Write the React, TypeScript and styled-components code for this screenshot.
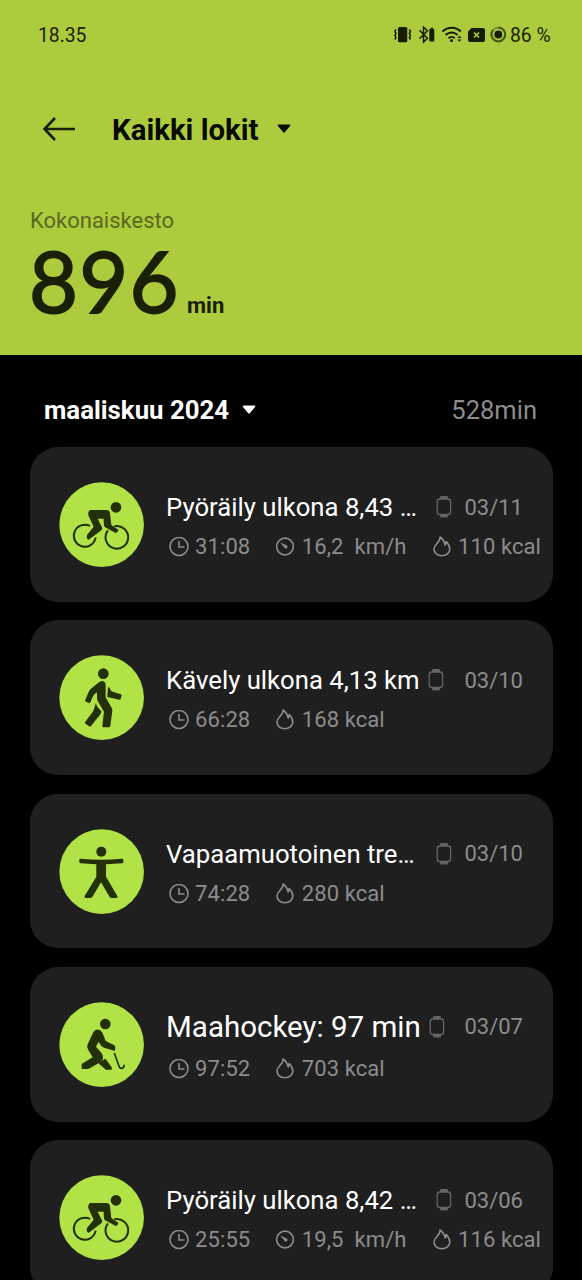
import React from "react";
import styled, { createGlobalStyle } from "styled-components";

const GlobalStyle = createGlobalStyle`
  * { box-sizing: border-box; }
  body { margin: 0; background: #000; font-family: Roboto, "Liberation Sans", sans-serif; }
  svg { display: block; flex: none; }
`;

const Screen = styled.main`
  width: 582px;
  height: 1280px;
  overflow: hidden;
  background: #000;
`;

const Hero = styled.header`
  height: 355px;
  background: #adcc3d;
  color: #1a2006;
`;

const StatusBar = styled.div`
  height: 70px;
  padding: 0 31px 0 38px;
  display: flex;
  align-items: center;
  justify-content: space-between;
  font-size: 19.3px;
  line-height: 24px;
`;

const Clock = styled.span`
  padding-top: 2px;
`;

const StatusIcons = styled.div`
  display: flex;
  align-items: center;
`;

const Battery = styled.span`
  width: 41px;
  margin-left: 2px;
  padding-top: 2px;
  white-space: nowrap;
`;

const NavBar = styled.div`
  height: 118px;
  padding-left: 42px;
  display: flex;
  align-items: center;
`;

const NavTitle = styled.h1`
  margin: 1px 19px 0 37px;
  font-size: 29.4px;
  line-height: 36px;
  font-weight: 700;
  color: #080a02;
`;

const Summary = styled.section`
  padding: 18px 0 0 30px;
`;

const SummaryLabel = styled.div`
  font-size: 22px;
  line-height: 30px;
  color: #59691f;
`;

const Total = styled.div`
  display: flex;
  align-items: baseline;
  height: 96px;
`;

const TotalNumber = styled.span`
  width: 150px;
  margin: 0 8px 0 -1px;
  font-family: Lato, Roboto, sans-serif;
  font-size: 84.5px;
  line-height: 90px;
  letter-spacing: 1.2px;
  -webkit-text-stroke: 1.8px #1a2006;
`;

const TotalUnit = styled.span`
  font-size: 22px;
  font-weight: 700;
`;

const MonthBar = styled.div`
  height: 92px;
  padding: 17px 45px 0 44px;
  display: flex;
  align-items: center;
`;

const MonthName = styled.h2`
  margin: 0 13px 0 0;
  font-size: 25.8px;
  line-height: 32px;
  font-weight: 700;
  color: #fff;
`;

const MonthTotal = styled.span`
  margin-left: auto;
  font-size: 25.5px;
  line-height: 32px;
  color: #8c8c8c;
`;

const List = styled.ul`
  margin: 0;
  padding: 0 29.5px;
  list-style: none;
  display: flex;
  flex-direction: column;
  gap: 18.6px;
`;

const Card = styled.li`
  flex: none;
  height: 154.7px;
  padding: 35px 0 0 29.3px;
  border-radius: 28px;
  background: #1f1f1f;
  display: flex;
  align-items: flex-start;
`;

const Details = styled.div`
  flex: 1;
  min-width: 0;
  margin-left: 22px;
`;

const TitleRow = styled.div`
  height: 50px;
  display: flex;
  align-items: center;
  padding-right: 29.5px;
`;

const Title = styled.h3<{ $width: number; $large?: boolean }>`
  margin: 0;
  width: ${(p) => p.$width}px;
  font-size: ${(p) => (p.$large ? 29.5 : 25.7)}px;
  line-height: 36px;
  font-weight: 400;
  white-space: nowrap;
  color: #fff;
`;

const DateText = styled.time`
  margin-left: auto;
  padding-top: 1px;
  font-size: 22px;
  line-height: 30px;
  color: #8c8c8c;
`;

const Stats = styled.div<{ $low?: boolean }>`
  display: flex;
  gap: 25px;
  padding: ${(p) => (p.$low ? 2 : 0)}px 0 0 2.5px;
`;

const Stat = styled.div`
  display: flex;
  align-items: center;
  gap: 6.5px;
  height: 30px;
  font-size: 22px;
  letter-spacing: 0.08px;
  line-height: 30px;
  white-space: pre;
  color: #8c8c8c;
`;

type Sport = "bike" | "walk" | "free" | "hockey";

const Caret = ({ color }: { color: string }) => (
  <svg width="14" height="10" viewBox="0 0 14 10" fill={color}>
    <path d="M1.6.5h10.8c.9 0 1.2.8.6 1.5L7.8 8.2c-.5.6-1.1.6-1.6 0L1 2C.4 1.300.7.5 1.600.5z" />
  </svg>
);

const BackArrow = () => (
  <svg width="33" height="26" viewBox="0 0 33 26" fill="none" stroke="#1a2006" strokeWidth="2.6">
    <path d="M33 13H2.500M13 2L2.500 13 13 24" />
  </svg>
);

const StatusGlyphs = () => (
  <svg width="114" height="24" viewBox="394 23 114 24" fill="#171c05">
    <rect x="398" y="27" width="9.300" height="15.300" rx="1.500" />
    <g fill="none" stroke="#171c05" strokeWidth="1.500">
      <path d="M396 29.500l-1.200 2 1.200 2-1.200 2 1.200 2-1.200 2M409.300 29.500l1.200 2-1.200 2 1.200 2-1.200 2 1.200 2" />
      <path d="M419.500 30.300l8 8-4 3.700V27.200l4 3.600-8 8" />
      <path d="M442.500 31.500c5.300-5 13-5 18.300 0M445.700 35c3.500-3.300 8.400-3.300 11.900 0M448.500 38.300c1.800-1.700 4.500-1.700 6.300 0" strokeWidth="2" />
    </g>
    <rect x="429.300" y="29" width="5" height="12.500" rx="1" />
    <rect x="430.600" y="27.700" width="2.400" height="2" />
    <circle cx="451.500" cy="40.500" r="1.500" />
    <path d="M457.300 38l2.100-2.300 2.100 2.300zM457.300 39.500l2.100 2.300 2.100-2.300z" />
    <path d="M471.500 28h11.500q2 0 2 2v10q0 2-2 2h-13q-2 0-2-2v-8.500z" />
    <path d="M474 32.500l5 5M479 32.500l-5 5" stroke="#adcc3d" strokeWidth="1.700" />
    <circle cx="498.300" cy="34.500" r="6.900" fill="none" stroke="#7b9128" strokeWidth="1.900" />
    <path d="M498.300 27.600a6.900 6.900 0 1 1-5.300 2.500" fill="none" stroke="#465414" strokeWidth="2" />
    <circle cx="498.300" cy="34.500" r="3.900" />
  </svg>
);

const WatchIcon = () => (
  <svg width="16" height="24" viewBox="0 0 16 24">
    <path d="M4.500 1h7l1.200 4H3.300zM4.500 22.500h7l1.200-4H3.300z" fill="#636363" />
    <rect x="1.200" y="4" width="13.400" height="15.500" rx="2.700" fill="#1f1f1f" stroke="#666" strokeWidth="1.300" />
  </svg>
);

const ClockIcon = () => (
  <svg width="20" height="20" viewBox="0 0 20 20" fill="none" stroke="#8c8c8c" strokeWidth="1.600">
    <circle cx="10" cy="9.500" r="9" />
    <path d="M10 4v6h5.500" />
  </svg>
);

const SpeedIcon = () => (
  <svg width="20" height="20" viewBox="0 0 20 20" fill="none" stroke="#8c8c8c" strokeWidth="1.600">
    <circle cx="10" cy="9.500" r="8.400" />
    <path d="M5.300 5.500l6 2.700a1.700 1.700 0 1 1-2 2.400z" fill="#8c8c8c" stroke="none" />
  </svg>
);

const FlameIcon = () => (
  <svg width="20" height="22" viewBox="0 0 20 22" fill="none" stroke="#8c8c8c" strokeWidth="1.600" strokeLinejoin="round">
    <path d="M8 1c.4 3-1.200 4.800-3.200 6.700C3 9.500 2 11 2 13c0 4 3.300 6.700 7.800 6.700s8-2.700 8-6.700c0-2.900-1.300-5.200-3.600-7.500 0 1.600-.1 2.400-1 3.500C12.500 6 11 3 8 1z" />
  </svg>
);

const frames: Record<Sport, string> = {
  bike: "26 20 256 256",
  walk: "26 21 256 256",
  free: "26 24 256 256",
  hockey: "26 18 256 256",
};

const figures: Record<Sport, React.ReactNode> = {
  bike: (
    <>
      <circle cx="197" cy="96" r="16" />
      <g fill="none" stroke="#23300a" strokeWidth="6">
        <path d="M119 152A33 33 0 1 0 136 187" />
        <path d="M192 153A34 34 0 1 1 173 165" />
      </g>
      <path d="M120 104h48q10 0 11 10l4 35 21 14q-1 9-8 10l-34-19q-2-8-2-24h-18l13 26q2 5-2 9l-39 29q-7-7-4-15l20-25-16-34q-2-12 6-16z" />
    </>
  ),
  walk: (
    <>
      <circle cx="159" cy="77" r="16" />
      <path d="M155 99q11 1 11 12v37l18 31q3 5 2 10l-6 45q-1 4-5 4h-15q-5 0-4-5l5-42-19-32q-2-4-2-10v-16q-10 6-12 12l-8 18q-1 3-4 2l-9-4q-4-2-2-6l11-25q2-5 6-8l22-18q6-5 11-5z" />
      <path d="M173 118q5 0 6 4 2 8 10 10l23 7q2 1 2 4l-3 10q-1 3-4 2l-36-8zM137 164q1 11 8 17l8 9q0 7-5 12l-26 32q-2 3-5 1l-12-8q-3-2 0-6l22-29q3-4 4-9z" />
    </>
  ),
  free: (
    <>
      <circle cx="153" cy="92" r="15" />
      <path d="M90 113q32 3 63 3t63-3q3 0 3 3v8q0 3-3 3-25 1-49 3v37l34 58q3 5-3 6h-15q-3 0-5-3l-26-44-26 44q-2 3-5 3h-15q-5-1-3-6l35-58v-37q-24-2-48-3-3 0-3-3v-8q0-3 3-3z" />
    </>
  ),
  hockey: (
    <>
      <circle cx="165" cy="84" r="16" />
      <path d="M143 101q10 1 14 11l9 23 25 12q4 2 4 7l-1 11-33-10q-8-2-14-14l-2-4-8 15 16 18q7 8 5 17-1 6-6 10l-31 18q-6 4-13 4H94v-15l33-20-13-22q-6-9-2-17l17-36q5-9 14-8z" />
      <path d="M164 188q5 5 8 9l12 17q1 3 0 7h-17l-23-19z" />
      <path d="M192 171l15 42q4 6 9 4 6-2 5-11" fill="none" stroke="#23300a" strokeWidth="5" />
    </>
  ),
};

const SportBadge = ({ sport }: { sport: Sport }) => (
  <svg width="85.300" height="85.300" viewBox={frames[sport]} fill="#23300a">
    <svg x="26" y={frames[sport].split(" ")[1]} width="256" height="256" viewBox="0 0 256 256">
      <circle cx="128" cy="128" r="127" fill="#b1e346" />
    </svg>
    {figures[sport]}
  </svg>
);

interface Log {
  sport: Sport;
  title: string;
  titleWidth: number;
  large?: boolean;
  date: string;
  duration: string;
  speed?: string;
  energy: string;
}

const logs: Log[] = [
  { sport: "bike", title: "Pyöräily ulkona 8,43 …", titleWidth: 269.5, date: "03/11", duration: "31:08", speed: "16,2  km/h", energy: "110 kcal" },
  { sport: "walk", title: "Kävely ulkona 4,13 km", titleWidth: 262, date: "03/10", duration: "66:28", energy: "168 kcal" },
  { sport: "free", title: "Vapaamuotoinen tre…", titleWidth: 269.5, date: "03/10", duration: "74:28", energy: "280 kcal" },
  { sport: "hockey", title: "Maahockey: 97 min", titleWidth: 263, large: true, date: "03/07", duration: "97:52", energy: "703 kcal" },
  { sport: "bike", title: "Pyöräily ulkona 8,42 …", titleWidth: 269.5, date: "03/06", duration: "25:55", speed: "19,5  km/h", energy: "116 kcal" },
];

const LogCard = ({ log }: { log: Log }) => (
  <Card>
    <SportBadge sport={log.sport} />
    <Details>
      <TitleRow>
        <Title $width={log.titleWidth} $large={log.large}>{log.title}</Title>
        <WatchIcon />
        <DateText>{log.date}</DateText>
      </TitleRow>
      <Stats $low={log.large}>
        <Stat><ClockIcon />{log.duration}</Stat>
        {log.speed && <Stat><SpeedIcon />{log.speed}</Stat>}
        <Stat><FlameIcon />{log.energy}</Stat>
      </Stats>
    </Details>
  </Card>
);

export default function App() {
  return (
    <Screen>
      <GlobalStyle />
      <Hero>
        <StatusBar>
          <Clock>18.35</Clock>
          <StatusIcons>
            <StatusGlyphs />
            <Battery>86 %</Battery>
          </StatusIcons>
        </StatusBar>
        <NavBar>
          <BackArrow />
          <NavTitle>Kaikki lokit</NavTitle>
          <Caret color="#080a02" />
        </NavBar>
        <Summary>
          <SummaryLabel>Kokonaiskesto</SummaryLabel>
          <Total>
            <TotalNumber>896</TotalNumber>
            <TotalUnit>min</TotalUnit>
          </Total>
        </Summary>
      </Hero>
      <MonthBar>
        <MonthName>maaliskuu 2024</MonthName>
        <Caret color="#fff" />
        <MonthTotal>528min</MonthTotal>
      </MonthBar>
      <List>
        {logs.map((log, i) => (
          <LogCard key={i} log={log} />
        ))}
      </List>
    </Screen>
  );
}
